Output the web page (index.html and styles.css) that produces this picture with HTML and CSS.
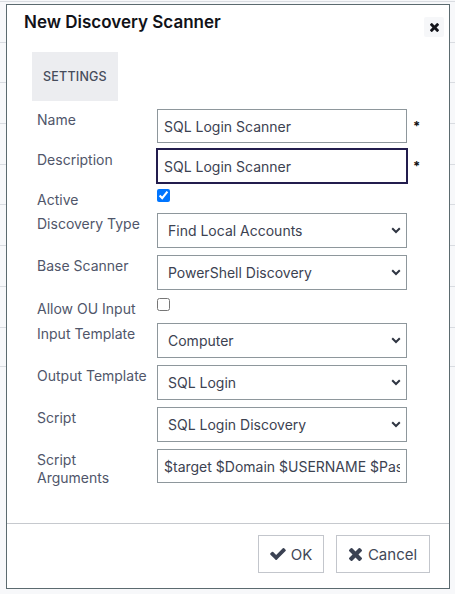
FILE: index.html
```html
<!DOCTYPE html>
<html>
<head>
<meta charset="utf-8">
<link rel="stylesheet" href="styles.css">
</head>
<body>
<div class="page-bg">
  <div class="bg-row"></div><div class="bg-row"></div><div class="bg-row"></div>
  <div class="bg-row"></div><div class="bg-row"></div><div class="bg-row"></div>
  <div class="bg-row"></div><div class="bg-row"></div><div class="bg-row"></div>
</div>

<div class="dialog">
  <div class="dialog-header">
    <h1 class="dialog-title">New Discovery Scanner</h1>
    <button class="close-btn" type="button" aria-label="Close">
      <svg class="icon-times-sm" viewBox="302 366 1188 1188"><path d="M1490 1322q0 40-28 68l-136 136q-28 28-68 28t-68-28l-294-294-294 294q-28 28-68 28t-68-28l-136-136q-28-28-28-68t28-68l294-294-294-294q-28-28-28-68t28-68l136-136q28-28 68-28t68 28l294 294 294-294q28-28 68-28t68 28l136 136q28 28 28 68t-28 68l-294 294 294 294q28 28 28 68z"/></svg>
    </button>
  </div>

  <div class="dialog-body">
    <div class="tabs">
      <div class="tab active">SETTINGS</div>
    </div>

    <div class="form">
      <div class="row row-name">
        <label class="label">Name</label>
        <input class="control text-input" type="text" value="SQL Login Scanner">
        <span class="req">*</span>
      </div>
      <div class="row row-desc">
        <label class="label">Description</label>
        <input class="control text-input focused" type="text" value="SQL Login Scanner">
        <span class="req">*</span>
      </div>
      <div class="row row-check row-active">
        <label class="label">Active</label>
        <input class="check" type="checkbox" checked>
      </div>
      <div class="row row-sel first-sel">
        <label class="label">Discovery Type</label>
        <div class="select-wrap">
          <select class="control select"><option>Find Local Accounts</option></select>
          <svg class="chev" viewBox="0 0 10 7"><path d="M1.2 1.3 L5 5 L8.8 1.3" /></svg>
        </div>
      </div>
      <div class="row row-sel">
        <label class="label">Base Scanner</label>
        <div class="select-wrap">
          <select class="control select"><option>PowerShell Discovery</option></select>
          <svg class="chev" viewBox="0 0 10 7"><path d="M1.2 1.3 L5 5 L8.8 1.3" /></svg>
        </div>
      </div>
      <div class="row row-check row-ou">
        <label class="label">Allow OU Input</label>
        <input class="check" type="checkbox">
      </div>
      <div class="row row-sel after-ou">
        <label class="label">Input Template</label>
        <div class="select-wrap">
          <select class="control select"><option>Computer</option></select>
          <svg class="chev" viewBox="0 0 10 7"><path d="M1.2 1.3 L5 5 L8.8 1.3" /></svg>
        </div>
      </div>
      <div class="row row-sel">
        <label class="label">Output Template</label>
        <div class="select-wrap">
          <select class="control select"><option>SQL Login</option></select>
          <svg class="chev" viewBox="0 0 10 7"><path d="M1.2 1.3 L5 5 L8.8 1.3" /></svg>
        </div>
      </div>
      <div class="row row-sel">
        <label class="label">Script</label>
        <div class="select-wrap">
          <select class="control select"><option>SQL Login Discovery</option></select>
          <svg class="chev" viewBox="0 0 10 7"><path d="M1.2 1.3 L5 5 L8.8 1.3" /></svg>
        </div>
      </div>
      <div class="row row-args">
        <label class="label">Script Arguments</label>
        <input class="control text-input" type="text" value="$target $Domain $USERNAME $Password">
      </div>
    </div>
  </div>

  <div class="dialog-footer">
    <button class="btn btn-ok" type="button">
      <svg class="icon-check" viewBox="121 334 1550 1188"><path d="M1671 566q0 40-28 68l-724 724-136 136q-28 28-68 28t-68-28l-136-136-362-362q-28-28-28-68t28-68l136-136q28-28 68-28t68 28l294 295 656-657q28-28 68-28t68 28l136 136q28 28 28 68z"/></svg>
      <span>OK</span>
    </button>
    <button class="btn btn-cancel" type="button">
      <svg class="icon-times" viewBox="302 366 1188 1188"><path d="M1490 1322q0 40-28 68l-136 136q-28 28-68 28t-68-28l-294-294-294 294q-28 28-68 28t-68-28l-136-136q-28-28-28-68t28-68l294-294-294-294q-28-28-28-68t28-68l136-136q28-28 68-28t68 28l294 294 294-294q28-28 68-28t68 28l136 136q28 28 28 68t-28 68l-294 294 294 294q28 28 28 68z"/></svg>
      <span>Cancel</span>
    </button>
  </div>
</div>
</body>
</html>
```

FILE: styles.css
```css
* { box-sizing: border-box; }

html, body {
  margin: 0;
  padding: 0;
  width: 455px;
  height: 594px;
  overflow: hidden;
}

body {
  background: #f7f8fa;
  font-family: Inter, "Noto Sans", "Liberation Sans", sans-serif;
  color: #4d5362;
  position: relative;
}

/* background table behind the modal */
.page-bg {
  padding-top: 1px;
}
.page-bg .bg-row {
  height: 40.7px;
  border-top: 1px solid #d9dce1;
}
.page-bg .bg-row:last-child {
  border-bottom: 1px solid #d9dce1;
}

/* modal */
.dialog {
  position: absolute;
  left: 6px;
  top: 4px;
  width: 444px;
  height: 585px;
  background: #fff;
  border: 1px solid #5b6a6f;
  display: flex;
  flex-direction: column;
}

.dialog-header {
  display: flex;
  align-items: flex-start;
  justify-content: space-between;
  padding: 5px 5px 0 17px;
  height: 29px;
}

.dialog-title {
  margin: 0;
  font-size: 17px;
  line-height: 24px;
  font-weight: 600;
  color: #111218;
}

.close-btn {
  margin-top: 7px;
  width: 20px;
  height: 20px;
  padding: 0;
  border: none;
  border-radius: 2px;
  background: #f6f7f9;
  display: flex;
  align-items: center;
  justify-content: center;
}
.icon-times-sm {
  width: 9px;
  height: 9px;
  fill: #15161c;
}

.dialog-body {
  flex: 1;
}

.tabs {
  display: flex;
  padding: 18px 0 0 25px;
}
.tab {
  width: 86px;
  height: 49px;
  background: #ecedf0;
  display: flex;
  align-items: center;
  justify-content: center;
  font-size: 12.5px;
  font-weight: 500;
  color: #464c5b;
  letter-spacing: 0.2px;
}

.form {
  padding: 8px 0 0 30px;
  display: flex;
  flex-direction: column;
}

.row {
  display: flex;
  align-items: flex-start;
}

.label {
  width: 120px;
  flex: none;
  padding-right: 9px;
  font-size: 14px;
  line-height: 18px;
  padding-top: 2px;
  color: #50566a;
}

.control {
  width: 250px;
  flex: none;
  font-family: Inter, "Noto Sans", "Liberation Sans", sans-serif;
  font-size: 14px;
  color: #3c4251;
  background: #fff;
  border: 1px solid #8e979c;
  border-radius: 0;
  margin: 0;
  outline: none;
}

.text-input {
  height: 34px;
  padding: 0 6px;
}

.text-input.focused {
  border: 1px solid #231d4d;
  outline: 1px solid #231d4d;
  outline-offset: 0;
  padding: 0 6px;
}

.req {
  margin-left: 6px;
  font-size: 13px;
  font-weight: 700;
  color: #111;
  line-height: 34px;
}

.row-name { height: 34px; }
.row-desc { margin-top: 6px; height: 34px; }

.row-check { height: 20px; }
.row-active { margin-top: 6px; }
.row-ou { margin-top: 8px; }

.check {
  margin: 0;
  width: 13px;
  height: 13px;
}

.row-sel { margin-top: 7px; }
.row-sel.first-sel { margin-top: 4px; }
.row-sel.after-ou { margin-top: 5px; }

.select-wrap {
  position: relative;
  width: 250px;
  height: 35px;
}
.select {
  height: 35px;
  padding: 0 24px 0 10px;
  appearance: none;
  -webkit-appearance: none;
}
.chev {
  position: absolute;
  right: 6px;
  top: 14px;
  width: 10px;
  height: 7px;
  fill: none;
  stroke: #2f3542;
  stroke-width: 2;
  pointer-events: none;
}

.row-args { margin-top: 7px; }
.row-args .text-input { height: 34px; }

/* footer */
.dialog-footer {
  height: 65px;
  flex: none;
  border-top: 1px solid #c6c9ce;
  padding: 11px 19px 0 0;
  display: flex;
  justify-content: flex-end;
  align-items: flex-start;
  gap: 12px;
}

.btn {
  height: 38px;
  background: #fff;
  border: 1px solid #c3c6cc;
  border-radius: 0;
  display: flex;
  align-items: center;
  justify-content: center;
  gap: 5px;
  font-family: Inter, "Noto Sans", "Liberation Sans", sans-serif;
  font-size: 15px;
  color: #424857;
  padding: 0;
}
.btn-ok { width: 66px; }
.btn-cancel { width: 94px; gap: 6px; }

.icon-check {
  width: 16px;
  height: 12px;
  fill: #3b4253;
}
.icon-times {
  width: 13px;
  height: 13px;
  fill: #3b4253;
}
```
